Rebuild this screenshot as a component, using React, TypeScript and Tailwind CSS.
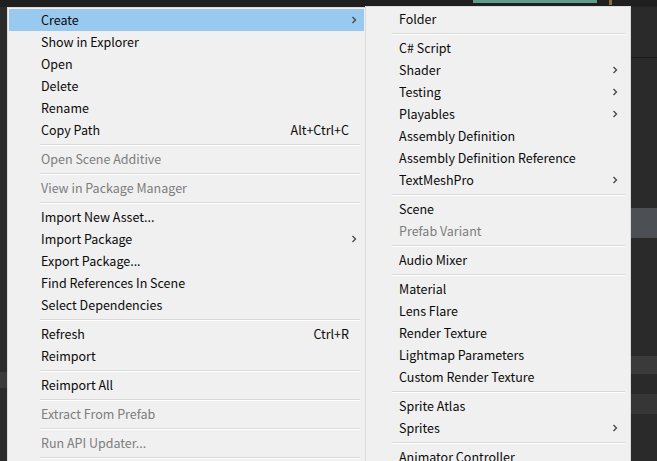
type Item = { label?: string; shortcut?: string; sub?: boolean; disabled?: boolean; active?: boolean; sep?: boolean };

const mainItems: Item[] = [
    { label: 'Create', sub: true, active: true },
    { label: 'Show in Explorer' },
    { label: 'Open' },
    { label: 'Delete' },
    { label: 'Rename' },
    { label: 'Copy Path', shortcut: 'Alt+Ctrl+C' },
    { sep: true },
    { label: 'Open Scene Additive', disabled: true },
    { sep: true },
    { label: 'View in Package Manager', disabled: true },
    { sep: true },
    { label: 'Import New Asset...' },
    { label: 'Import Package', sub: true },
    { label: 'Export Package...' },
    { label: 'Find References In Scene' },
    { label: 'Select Dependencies' },
    { sep: true },
    { label: 'Refresh', shortcut: 'Ctrl+R' },
    { label: 'Reimport' },
    { sep: true },
    { label: 'Reimport All' },
    { sep: true },
    { label: 'Extract From Prefab', disabled: true },
    { sep: true },
    { label: 'Run API Updater...', disabled: true },
    { sep: true },
];

const createItems: Item[] = [
    { label: 'Folder' },
    { sep: true },
    { label: 'C# Script' },
    { label: 'Shader', sub: true },
    { label: 'Testing', sub: true },
    { label: 'Playables', sub: true },
    { label: 'Assembly Definition' },
    { label: 'Assembly Definition Reference' },
    { label: 'TextMeshPro', sub: true },
    { sep: true },
    { label: 'Scene' },
    { label: 'Prefab Variant', disabled: true },
    { sep: true },
    { label: 'Audio Mixer' },
    { sep: true },
    { label: 'Material' },
    { label: 'Lens Flare' },
    { label: 'Render Texture' },
    { label: 'Lightmap Parameters' },
    { label: 'Custom Render Texture' },
    { sep: true },
    { label: 'Sprite Atlas' },
    { label: 'Sprites', sub: true },
    { sep: true },
    { label: 'Animator Controller' },
];

function Chevron() {
    return (
        <svg width="6" height="8" viewBox="0 0 6 8" className="shrink-0">
            <path d="M1.5 1 L4.5 4 L1.5 7" fill="none" stroke="#444" strokeWidth="1.3" />
        </svg>
    );
}

function Menu({ items, sepInset, width, rowPad }: { items: Item[]; sepInset: string; width: string; rowPad: string }) {
    return (
        <div className={`${width} border border-[#dadada] bg-[#f0f0f0] p-[1px]`}>
            {items.map((it, i) =>
                it.sep ? (
                    <div key={i} className={`flex h-[7px] flex-col justify-center ${sepInset} pr-[4px]`}>
                        <div className="h-px bg-[#d9d9d9]" />
                        <div className="h-px bg-white" />
                    </div>
                ) : (
                    <div
                        key={i}
                        className={`flex h-[22px] items-center pl-[32px] ${rowPad} ${it.active ? 'bg-[#99c9ef]' : ''} ${it.disabled ? 'text-[#7d7d7d]' : 'text-[#0a0a0a]'}`}
                    >
                        <span className="flex-1 whitespace-nowrap">{it.label}</span>
                        {it.shortcut && <span className="mr-[2px] whitespace-nowrap">{it.shortcut}</span>}
                        {it.sub && <Chevron />}
                        {!it.sub && it.shortcut && <span className="w-[6px]" />}
                    </div>
                ),
            )}
        </div>
    );
}

export default function App() {
    return (
        <div
            className="relative h-[461px] w-[657px] overflow-hidden bg-[#282828] text-[12.5px]"
            style={{ fontFamily: '"Noto Sans CJK SC", "Noto Sans", sans-serif' }}
        >
            {/* editor underneath */}
            <div className="flex h-full flex-col">
                <div className="flex h-[7px] bg-[#1f1f1f]">
                    <div className="w-[473px]" />
                    <div className="h-[3px] w-[124px] bg-[#5f9c8c]" />
                    <div className="ml-[12px] h-[5px] w-[3px] bg-[#8a6a3a]" />
                </div>
                <div className="flex flex-1">
                    <div className="flex w-[7px] flex-col bg-[#2b2b2b]">
                        <div className="h-[365px]" />
                        <div className="h-[16px] bg-[#3a3a3a]" />
                    </div>
                    <div className="flex-1" />
                    <div className="flex w-[27px] flex-col border-l border-[#1c1c1c] bg-[#2a2a2a]">
                        <div className="h-[50px]" />
                        <div className="h-px bg-[#1a1a1a]" />
                        <div className="h-[150px]" />
                        <div className="h-[30px] bg-[#4c5054]" />
                        <div className="h-[118px]" />
                        <div className="h-[18px] bg-[#3a3a3a]" />
                        <div className="h-[20px]" />
                        <div className="h-[20px] bg-[#363636]" />
                    </div>
                </div>
            </div>

            {/* context menu */}
            <div className="absolute left-[7px] top-[7px]">
                <Menu items={mainItems} sepInset="pl-[31px]" width="w-[359px]" rowPad="pr-[7px]" />
            </div>
            <div className="absolute left-[365px] top-[6px]">
                <Menu items={createItems} sepInset="pl-[25px]" width="w-[266px]" rowPad="pr-[11px]" />
            </div>
        </div>
    );
}
